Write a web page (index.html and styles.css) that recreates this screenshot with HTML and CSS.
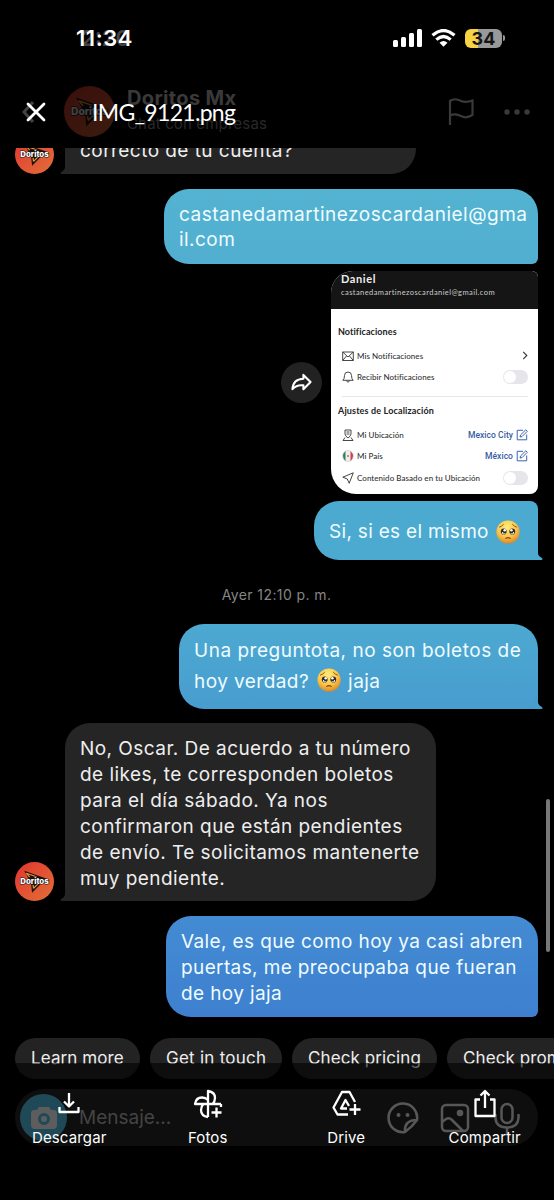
FILE: index.html
```html
<!DOCTYPE html>
<html lang="es">
<head>
<meta charset="utf-8">
<title>IMG_9121.png</title>
<link rel="stylesheet" href="styles.css">
</head>
<body>
<svg class="defs" aria-hidden="true">
  <defs>
    <radialGradient id="face" cx=".45" cy=".3" r=".72"><stop offset="0" stop-color="#ffec7c"/><stop offset=".55" stop-color="#fdc94b"/><stop offset="1" stop-color="#dc8322"/></radialGradient>
    <linearGradient id="red" x1="0" y1="0" x2="1" y2="1"><stop offset="0" stop-color="#e2352f"/><stop offset="1" stop-color="#e27038"/></linearGradient>
    <symbol id="pleading" viewBox="0 0 24 24">
      <circle cx="12" cy="12" r="11.6" fill="url(#face)"/>
      <path d="M3.2 7.2Q6 6.4 7.7 4.2M20.8 7.2Q18 6.4 16.3 4.2" fill="none" stroke="#8b521b" stroke-width="1"/>
      <ellipse cx="7.7" cy="11.5" rx="2.9" ry="3.1" fill="#392821"/><ellipse cx="16.3" cy="11.5" rx="2.9" ry="3.1" fill="#392821"/>
      <path d="M5.300 13.300Q7.700 15.500 10.100 13.300M13.900 13.300Q16.300 15.500 18.700 13.300" fill="#b6e0f0"/>
      <circle cx="8.7" cy="10.300" r="1.300" fill="#fff"/><circle cx="15.400" cy="10.300" r="1.300" fill="#fff"/>
      <circle cx="6.600" cy="12.700" r=".7" fill="#fff"/><circle cx="17.500" cy="12.700" r=".7" fill="#fff"/>
      <path d="M9.7 18.400Q12 16.800 14.300 18.400" fill="none" stroke="#7d4316" stroke-width="1.100" stroke-linecap="round"/>
    </symbol>
    <symbol id="doritos" viewBox="0 0 40 40">
      <circle cx="20" cy="20" r="20" fill="url(#red)"/>
      <path d="M9.500 9 32 17 17.500 31.500 16.500 22Z" fill="#1b1210"/>
      <path d="M11.500 11.500 22 15.200M15 15.500 11.500 11.500M19 27 26 20M18.500 23.500 19 27" fill="none" stroke="#f09a35" stroke-width="1.200"/>
      <text x="20" y="23" text-anchor="middle" textLength="29" lengthAdjust="spacingAndGlyphs" class="logo-text">Doritos</text>
    </symbol>
    <symbol id="edit" viewBox="0 0 12 12"><path d="M7 1.3H1.2V10.8H10.7V5.5M4 8 4.5 6 9.8.8 11.3 2.3 6 7.6Z" fill="none" stroke="#3a64ad" stroke-width="1"/></symbol>
  </defs>
</svg>
<div class="screen">
  <header class="chat-header">
    <svg class="back" viewBox="0 0 12 22"><path d="M11 1 2 11l9 10"/></svg>
    <svg class="header-avatar"><use href="#doritos"/></svg>
    <div class="contact"><strong><span>Doritos Mx</span></strong><small><span>Chat con empresas</span></small></div>
    <svg class="flag" viewBox="0 0 26 28"><path d="M2 27V3Q7-.5 13 3 18 5 24.500 2.500V17Q18 21 13 18 7 15 2 17.500"/></svg>
    <svg class="more" viewBox="0 0 26 6"><circle cx="3" cy="3" r="2.700"/><circle cx="13" cy="3" r="2.700"/><circle cx="23" cy="3" r="2.700"/></svg>
  </header>
  <main class="messages">
    <div class="row in first">
      <svg class="avatar"><use href="#doritos"/></svg>
      <div class="bubble gray b-first"><span>correcto de tu cuenta?</span><svg class="tail-l" viewBox="0 0 10 12"><path d="M5 0V5Q5 8 1 10-.5 12 2 12H10V0Z"/></svg></div>
    </div>
    <div class="row out r-mail"><div class="bubble b-mail"><span class="wide">castanedamartinezoscardaniel@gma</span><span>il.com</span></div></div>
    <div class="row out r-card">
      <div class="share"><svg viewBox="0 0 22 20"><path d="M13 2 20.500 9.500 13 17V13Q6 12 1.500 17 2 6.500 13 6Z"/></svg></div>
      <section class="card">
        <div class="card-head"><b>Daniel</b><span>castanedamartinezoscardaniel@gmail.com</span></div>
        <div class="card-body">
          <h3><span>Notificaciones</span></h3>
          <div class="item"><svg viewBox="0 0 12 12"><path d="M.7 2H11.300V10.500H.7ZL6 7 11.300 2M.7 10.500 4.500 6M11.300 10.500 7.500 6"/></svg><span>Mis Notificaciones</span><svg class="chev" viewBox="0 0 6 10"><path d="M1 1 5 5 1 9"/></svg></div>
          <div class="item"><svg viewBox="0 0 12 12"><path d="M.8 9.300Q2.500 8 2.500 4.500A3.500 3.500 0 0 1 9.500 4.500Q9.500 8 11.200 9.300ZM4.500 9.500Q6 13 7.500 9.500"/></svg><span>Recibir Notificaciones</span><i class="toggle"></i></div>
          <hr>
          <h3 class="second"><span>Ajustes de Localización</span></h3>
          <div class="item"><svg viewBox="0 0 12 12"><path d="M3 1H9V5Q8.500 7.500 6 9 3.500 7.500 3 5ZM4.500 3H7.500M4.500 5H7.500M3 8.500 1 11.500H11L9 8.500"/></svg><span>Mi Ubicación</span><a>Mexico City</a><svg><use href="#edit"/></svg></div>
          <div class="item"><svg viewBox="0 0 12 12"><circle cx="6" cy="6" r="5.500" fill="#eee" stroke="#bbb" stroke-width=".5"/><path d="M3.500 1Q-1.500 6 3.500 11Z" fill="#33805c" stroke="none"/><path d="M8.500 1Q13.500 6 8.500 11Z" fill="#cc4050" stroke="none"/><circle cx="6" cy="6" r="1" fill="#a98050" stroke="none"/></svg><span>Mi País</span><a>México</a><svg><use href="#edit"/></svg></div>
          <div class="item"><svg viewBox="0 0 12 12"><path d="M.8 5.200 11.300.8 7.200 11.300 5.300 7Z"/></svg><span>Contenido Basado en tu Ubicación</span><i class="toggle"></i></div>
        </div>
      </section>
    </div>
    <div class="row out r-same"><div class="bubble b-same"><span>Si, si es el mismo</span><svg class="emoji"><use href="#pleading"/></svg><svg class="tail-r" viewBox="0 0 10 12"><path d="M5 0V5Q5 8 9 10 10.500 12 8 12H0V0Z"/></svg></div></div>
    <div class="time"><span>Ayer 12:10 p. m.</span></div>
    <div class="row out"><div class="bubble b-ask"><span class="wide">Una preguntota, no son boletos de</span><div class="mixed"><span>hoy verdad?</span><svg class="emoji"><use href="#pleading"/></svg><span>jaja</span></div><svg class="tail-r" viewBox="0 0 10 12"><path d="M5 0V5Q5 8 9 10 10.500 12 8 12H0V0Z"/></svg></div></div>
    <div class="row in r-reply">
      <svg class="avatar"><use href="#doritos"/></svg>
      <div class="bubble gray b-reply"><span>No, Oscar. De acuerdo a tu número</span><span>de likes, te corresponden boletos</span><span>para el día sábado. Ya nos</span><span>confirmaron que están pendientes</span><span>de envío. Te solicitamos mantenerte</span><span>muy pendiente.</span><svg class="tail-l" viewBox="0 0 10 12"><path d="M5 0V5Q5 8 1 10-.5 12 2 12H10V0Z"/></svg></div>
    </div>
    <div class="row out r-ok"><div class="bubble b-ok"><span>Vale, es que como hoy ya casi abren</span><span>puertas, me preocupaba que fueran</span><span>de hoy jaja</span></div></div>
  </main>
  <div class="chips"><div class="k1"><span>Learn more</span></div><div class="k2"><span>Get in touch</span></div><div class="k3"><span>Check pricing</span></div><div class="k4"><span>Check promotions</span></div></div>
  <div class="composer">
    <div class="camera"><svg viewBox="0 0 28 24"><path fill-rule="evenodd" d="M9 1H19L21 4H24Q27 4 27 8V19Q27 23 23 23H5Q1 23 1 19V8Q1 4 4 4H7ZM14 7A6 6 0 1 0 14 19 6 6 0 1 0 14 7ZM14 10A3 3 0 1 1 14 16 3 3 0 1 1 14 10Z"/></svg></div>
    <span class="placeholder">Mensaje...</span>
    <svg class="tool t1" viewBox="0 0 32 32"><path d="M30 18A14.300 14.300 0 1 0 18 30Q25 25 30 18ZM18 30Q17 18 30 18"/><circle class="dot" cx="11.500" cy="13" r="2"/><circle class="dot" cx="20.500" cy="13" r="2"/></svg>
    <svg class="tool t2" viewBox="0 0 30 30"><rect x="2" y="2" width="26" height="26" rx="4"/><path d="M2 19 6 16Q9 14 12 17L23 28"/><circle class="dot" cx="20" cy="10" r="3.300"/></svg>
    <svg class="tool t3" viewBox="0 0 26 32"><rect x="7.500" y="2" width="11" height="19" rx="5.500"/><path d="M1.500 12V16Q2 25.500 13 25.500T24.500 16V12M13 26V32"/></svg>
  </div>
  <i class="scroll"></i>
  <div class="top-overlay">
    <div class="status"><span class="under">2:20</span><b class="clock">11:34</b>
      <svg class="signal" viewBox="0 0 29 18"><rect y="11" width="5" height="7" rx="1.500"/><rect x="8" y="8" width="5" height="10" rx="1.500"/><rect x="16" y="4" width="5" height="14" rx="1.500"/><rect x="24" width="5" height="18" rx="1.500"/></svg>
      <svg class="wifi" viewBox="0 0 25 18"><path d="M1.500 6.300Q12.500-3.300 23.500 6.300M5.300 10.600Q12.500 4.400 19.700 10.600" fill="none" stroke="#fff" stroke-width="3.200"/><path d="M8.500 13.700Q12.500 10.300 16.500 13.700L12.500 17.800Z" fill="#fff"/></svg>
      <span class="battery"><b>34</b></span><i class="nub"></i>
    </div>
    <div class="filebar"><svg viewBox="0 0 20 20"><path d="m2 2 16 16M18 2 2 18"/></svg><span class="filename">IMG_9121.png</span></div>
  </div>
  <nav class="actions">
    <div><svg viewBox="0 0 30 30"><path d="M15 4V17M10 12.500 15 17.500 20 12.500M5.500 18V23H24.500V18"/></svg><span>Descargar</span></div>
    <div><svg viewBox="0 0 30 30"><path d="M15 28V2Q22 3 22 9Q22 12.500 19.500 15M28 15H2Q3 8.500 9 8.500Q12.500 8.500 15 11M15 28Q8 27 8 21Q8 17.500 10.500 15M28 15V18M23.500 18.500V28.500M18.500 23.500H28.500"/></svg><span>Fotos</span></div>
    <div><svg viewBox="0 0 30 30"><path d="M17 25.500H6.500L2.500 18.500 11 3H18.500L24 13M16 19.500H10L14.500 11 18 17M24 15V26M18.500 20.500H29.500"/></svg><span>Drive</span></div>
    <div><svg viewBox="0 0 30 30"><path d="M15 19V2M10.500 6.500 15 2 19.500 6.500M10 10.500H5.500V27H24.500V10.500H20"/></svg><span>Compartir</span></div>
  </nav>
</div>
</body>
</html>
```
FILE: styles.css
```css
* { box-sizing: border-box; }
body { margin: 0; background: #000; font-family: Inter, "Liberation Sans", sans-serif; }
svg { flex: none; display: block; }
.defs { position: absolute; width: 0; height: 0; }
.logo-text { font: 800 8px Inter, sans-serif; fill: #fff; stroke: #111; stroke-width: 1.200px; paint-order: stroke; }
.screen { position: relative; width: 554px; height: 1200px; overflow: hidden; background: #000; }
.chat-header { height: 148px; padding: 86px 24px 0 22px; display: flex; align-items: flex-start; }
.back { width: 12px; height: 22px; margin: 15px 30px 0 0; fill: none; stroke: #fff; stroke-width: 3; }
.header-avatar { width: 51px; height: 51px; margin-right: 12px; }
.contact { flex: 1; color: #ddd; }
.contact strong { display: block; font-size: 20px; line-height: 24px; letter-spacing: .35px; }
.contact small { display: block; font-size: 15px; line-height: 24px; letter-spacing: .15px; color: #999; margin-top: 2px; }
.flag { width: 26px; height: 28px; margin: 12px 30px 0 0; fill: none; stroke: #ddd; stroke-width: 2.200; }
.more { width: 26px; height: 6px; margin-top: 23px; fill: #ddd; }
.messages { height: 890px; overflow: hidden; }
.row { display: flex; position: relative; }
.row.out { justify-content: flex-end; padding-right: 16px; }
.row.in { padding-left: 15px; align-items: flex-end; }
.avatar { width: 39px; height: 39px; margin-right: 11px; }
.bubble { position: relative; border-radius: 25px; padding: 13px 15px; color: #effcff; font-size: 19px; line-height: 25.900px; letter-spacing: .45px; white-space: nowrap; }
.bubble > span { display: block; }
.bubble .wide { letter-spacing: .51px; }
.bubble.gray { background: #252525; color: #eee; border-bottom-left-radius: 3px; }
.tail-l { position: absolute; left: -5px; bottom: 0; width: 10px; height: 12px; fill: #252525; }
.tail-r { position: absolute; right: -5px; bottom: 0; width: 10px; height: 12px; }
.first { height: 26px; }
.b-first { width: 351px; height: 78px; padding-top: 42px; }
.r-mail { margin-top: 14.500px; }
.b-mail { width: 374px; height: 75.500px; background: linear-gradient(#54b3d1, #51aed0); border-bottom-right-radius: 6px; }
.r-card { margin-top: 7px; align-items: center; gap: 9px; }
.share { width: 41px; height: 41px; border-radius: 50%; background: #222; display: grid; place-items: center; }
.share svg { width: 21px; height: 19px; fill: none; stroke: #fff; stroke-width: 2.200; stroke-linejoin: round; }
.card { width: 207px; height: 223px; border-radius: 22px 6px 8px 25px; overflow: hidden; background: #fff; font-family: Lato, sans-serif; white-space: nowrap; color: #333; }
.card-head { height: 38px; background: #151515; padding-left: 10px; color: #eee; }
.card-head b { display: block; font-size: 11px; line-height: 16px; letter-spacing: .6px; }
.card-head span { display: block; font-size: 7.500px; line-height: 12px; letter-spacing: .42px; color: #ccc; }
.card-body { padding: 15px 10px 0 7px; }
.card h3 { font-size: 9px; line-height: 16px; letter-spacing: .08px; margin: 0 0 5px; color: #222; }
.item { height: 21.500px; padding-left: 4px; display: flex; align-items: center; font-size: 8px; font-weight: 500; letter-spacing: .05px; }
.item svg { width: 12px; height: 12px; fill: none; stroke: #333; stroke-width: .9; }
.item > span { margin-left: 3px; flex: 1; }
.item a { color: #355ca4; margin-right: 3px; font-family: Roboto, sans-serif; font-size: 8.500px; }
.item .chev { width: 6px; height: 9px; margin-right: 0; stroke-width: 1.200; }
.toggle { width: 25px; height: 14px; border-radius: 7px; background: #e6e6ea; padding: 1px; }
.toggle::before { content: ""; display: block; width: 12px; height: 12px; border-radius: 50%; background: #fff; }
hr { border: 0; height: 1px; background: #e7e7e7; margin: 8px 0 6px 4px; }
.card h3.second { margin-bottom: 5px; letter-spacing: .15px; }
.r-same { margin-top: 7px; }
.b-same { width: 224px; height: 59px; padding-top: 16px; background: #4caad0; border-top-right-radius: 8px; border-bottom-right-radius: 3px; display: flex; align-items: center; gap: 7px; letter-spacing: .3px; }
.b-same .tail-r { fill: #4caad0; }
.emoji { width: 24px; height: 24px; }
.time { height: 64px; padding-top: 25px; padding-right: 1px; text-align: center; font-size: 14px; line-height: 20px; letter-spacing: .4px; color: #858585; white-space: nowrap; }
.b-ask { width: 359px; height: 84.500px; padding-top: 10.500px; background: linear-gradient(#4ca9d1, #489dcf); line-height: 31px; border-bottom-right-radius: 3px; }
.b-ask .tail-r { fill: #489dcf; }
.mixed { display: flex; align-items: center; height: 31px; gap: 7.500px; }
.mixed .emoji { margin-top: -2px; }
.r-reply { margin-top: 14.500px; }
.b-reply { width: 371px; height: 178px; padding-top: 13px; }
.r-ok { margin-top: 15px; }
.b-ok { width: 372px; height: 101px; background: linear-gradient(#438bd3, #3e80cf); border-bottom-right-radius: 6px; letter-spacing: .38px; }
.chips { height: 41px; display: flex; gap: 10px; margin-left: 15px; white-space: nowrap; }
.chips div { flex: none; height: 41px; border-radius: 21px; background: #232323; color: #eee; font-size: 17px; line-height: 40px; padding-left: 16px; letter-spacing: .1px; }
.k1 { width: 125px; } .chips .k2 { width: 132px; letter-spacing: .25px; } .k3 { width: 145px; } .k4 { width: 180px; }
.composer { height: 57px; margin: 10px 16px 0 15px; border-radius: 29px; background: #222; display: flex; align-items: center; padding: 0 18px 0 5px; }
.camera { width: 47px; height: 47px; border-radius: 50%; background: #4bafd0; display: grid; place-items: center; }
.camera svg { width: 28px; height: 24px; fill: #ddd; }
.placeholder { flex: 1; font-size: 19px; color: #a0a0a0; margin-left: 12px; white-space: nowrap; }
.tool { fill: none; stroke: #d0d0d0; stroke-width: 2.500; }
.tool .dot { fill: #d0d0d0; stroke: none; }
.t1 { width: 32px; height: 32px; margin-right: 21px; }
.t2 { width: 30px; height: 30px; margin-right: 24px; }
.t3 { width: 26px; height: 32px; }
.scroll { position: absolute; left: 546px; top: 799px; width: 4px; height: 153px; border-radius: 2px; background: #777; }
.top-overlay { position: absolute; inset: 0 0 auto; height: 148px; background: rgba(0,0,0,.74); color: #fff; }
.status { position: relative; height: 76px; padding: 0 49px 0 76px; display: flex; align-items: center; }
.clock { flex: 1; position: relative; font-size: 22px; line-height: 26px; font-weight: 600; letter-spacing: .55px; }
.under { position: absolute; left: 81px; top: 25px; font-size: 22px; font-weight: 600; color: #444; }
.signal { width: 29px; height: 18px; margin-right: 9px; fill: #fff; }
.wifi { width: 25px; height: 18px; margin-right: 9px; }
.battery { width: 37px; height: 19px; border-radius: 6px; background: linear-gradient(90deg, #f5d343 13px, #999 13px); color: #151515; font-size: 18px; line-height: 19px; text-align: center; }
.battery b { display: block; }
.nub { width: 2px; height: 6px; margin-left: 1px; border-radius: 0 2px 2px 0; background: #999; }
.filebar { height: 72px; padding-left: 26px; display: flex; align-items: center; }
.filebar svg { width: 20px; height: 20px; margin-right: 46px; fill: none; stroke: #fff; stroke-width: 2.800; stroke-linecap: round; }
.filename { font-size: 23px; line-height: 28px; font-family: Lato, sans-serif; letter-spacing: -.7px; }
.actions { position: absolute; left: 0; right: 0; top: 1063px; height: 137px; padding-top: 26px; background: rgba(0,0,0,.58); color: #fff; display: grid; grid-template-columns: repeat(4, 138.500px); }
.actions div { display: flex; flex-direction: column; align-items: center; white-space: nowrap; }
.actions svg { width: 30px; height: 30px; fill: none; stroke: #fff; stroke-width: 2.300; stroke-linejoin: round; }
.actions span { font-size: 15px; line-height: 20px; letter-spacing: .15px; margin-top: 9px; }
```
